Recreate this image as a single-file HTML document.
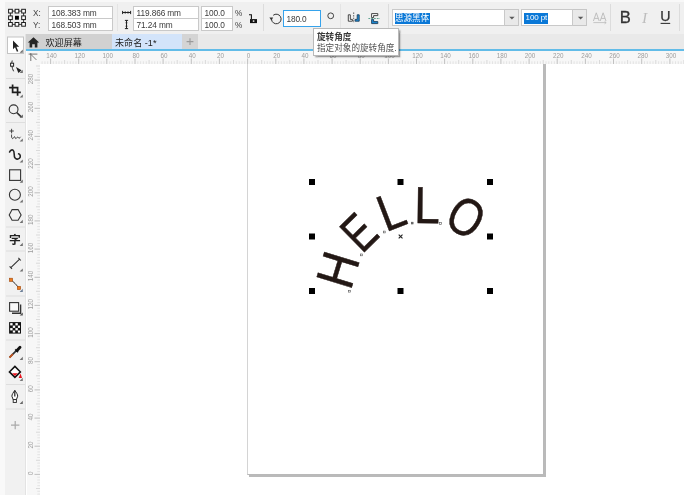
<!DOCTYPE html>
<html lang="zh-CN">
<head>
<meta charset="utf-8">
<title>CorelDRAW - 未命名 -1</title>
<style>
html,body{margin:0;padding:0;}
body{width:684px;height:495px;overflow:hidden;background:#fff;position:relative;
  font-family:"Liberation Sans","Noto Sans CJK SC",sans-serif;font-size:8.5px;color:#333;}
.abs{position:absolute;}
#topbar{left:0;top:0;width:684px;height:34px;background:#f0f0f0;}
#topbar .hl{left:0;top:0;width:684px;height:2px;background:#f8f8f8;}
#leftstrip{left:0;top:0;width:5px;height:34px;background:#f9f9f9;}
#tabbar{left:26px;top:34px;width:658px;height:15px;background:#e9e9e9;}
#blueline{left:26px;top:49px;width:658px;height:2px;background:#62bce8;}
#toolbox{left:0;top:34px;width:26px;height:461px;background:linear-gradient(90deg,#f9f9f9 0,#f9f9f9 5px,#f1f1f1 5px,#f1f1f1 25px,#e3e3e3 25px);}
#hruler{left:27px;top:51px;width:657px;height:13px;background:#f7f7f7;}
#vruler{left:27px;top:64px;width:13px;height:431px;background:#f7f7f7;}
.inp{background:#fff;border:1px solid #c9c9c9;box-sizing:border-box;height:12px;line-height:12px;
  font-size:8.3px;letter-spacing:-0.12px;color:#3a3a3a;padding-left:2.6px;white-space:nowrap;overflow:hidden;}
.lbl{font-size:8.2px;color:#444;line-height:12px;white-space:nowrap;}
.sep{width:1px;background:#dcdcdc;top:4px;height:27px;}
.tab{top:0;height:15px;font-size:9.1px;line-height:18.5px;color:#222;white-space:nowrap;}
.tsep{left:5px;width:18px;height:1px;background:#dedede;}
#tip{left:313px;top:27.5px;width:86px;height:28px;background:#fff;border:1px solid #b9b9b9;box-sizing:border-box;
  box-shadow:1.5px 1.5px 1.5px rgba(0,0,0,.38);font-size:8.6px;line-height:11.6px;color:#505050;padding:3px 0 0 3px;white-space:nowrap;}
.sel{background:#0a78d7;color:#fff;line-height:10.5px;font-size:8px;white-space:nowrap;overflow:hidden;}
.cbtn{background:#e9e9e9;border:1px solid #c6c6c6;border-left:none;box-sizing:border-box;}
.big{font-size:16px;line-height:17px;}
</style>
</head>
<body>
<div id="root" style="position:absolute;left:0;top:0;width:684px;height:495px;will-change:transform;overflow:hidden;background:#fff;">

<!-- canvas / page -->
<div class="abs" id="page" style="left:247.1px;top:54px;width:295.4px;height:418.6px;background:#fff;border:1px solid #d4d4d4;border-right-color:#b9b9b9;border-bottom-color:#b9b9b9;box-sizing:content-box;box-shadow:2px 2px 0 #bababa;"></div>

<!-- artwork -->
<svg class="abs" id="art" style="left:0;top:0;will-change:transform" width="684" height="495" viewBox="0 0 684 495">
  <g font-family="Liberation Sans, sans-serif" font-size="53" fill="#231815" stroke="#231815" stroke-width="0.5" opacity="0.999" text-rendering="geometricPrecision">
    <text transform="translate(350.5,291.2) rotate(-73) scale(0.88,1)">H</text>
    <text transform="translate(362.0,254.4) rotate(-44.6) scale(0.76,0.975)">E</text>
    <text transform="translate(385.8,232.2) rotate(-21) scale(0.86,0.975)">L</text>
    <text transform="translate(414,222.9) rotate(0.7) scale(0.87,0.985)">L</text>
    <text transform="translate(442.2,224.4) rotate(30) scale(0.82,1)">O</text>
  </g>
  <g fill="#000">
    <rect x="309" y="179" width="6" height="6"/><rect x="397.5" y="179" width="6" height="6"/><rect x="487" y="179" width="6" height="6"/>
    <rect x="309" y="233.5" width="6" height="6"/><rect x="487" y="233.5" width="6" height="6"/>
    <rect x="309" y="288" width="6" height="6"/><rect x="397.5" y="288" width="6" height="6"/><rect x="487" y="288" width="6" height="6"/>
  </g>
  <g fill="#fff" stroke="#555" stroke-width="0.6">
    <rect x="348.6" y="290.3" width="1.8" height="1.8"/>
    <rect x="360.5" y="254" width="1.8" height="1.8"/>
    <rect x="383.4" y="231.1" width="1.8" height="1.8"/>
    <rect x="411.3" y="222.2" width="1.8" height="1.8" fill="#777"/>
    <rect x="439.4" y="222.4" width="2.2" height="2.2"/>
  </g>
  <path d="M398.7 234.6l3.8 3.8M402.5 234.6l-3.8 3.8" stroke="#222" stroke-width="1.1" fill="none"/>
</svg>

<!-- rulers -->
<div class="abs" id="hruler"></div>
<div class="abs" id="vruler"></div>
<!-- RULERS_START -->
<svg class="abs" id="hr" style="left:27px;top:51px" width="657" height="13" viewBox="27 51 657 13">
<path d="M42.1 61.3V64M44.9 61.3V64M47.7 61.3V64M53.4 61.3V64M56.2 61.3V64M59.0 61.3V64M61.8 61.3V64M67.4 61.3V64M70.3 61.3V64M73.1 61.3V64M75.9 61.3V64M81.5 61.3V64M84.3 61.3V64M87.1 61.3V64M90.0 61.3V64M95.6 61.3V64M98.4 61.3V64M101.2 61.3V64M104.0 61.3V64M109.7 61.3V64M112.5 61.3V64M115.3 61.3V64M118.1 61.3V64M123.7 61.3V64M126.6 61.3V64M129.4 61.3V64M132.2 61.3V64M137.8 61.3V64M140.6 61.3V64M143.4 61.3V64M146.3 61.3V64M151.9 61.3V64M154.7 61.3V64M157.5 61.3V64M160.3 61.3V64M166.0 61.3V64M168.8 61.3V64M171.6 61.3V64M174.4 61.3V64M180.0 61.3V64M182.9 61.3V64M185.7 61.3V64M188.5 61.3V64M194.1 61.3V64M196.9 61.3V64M199.7 61.3V64M202.6 61.3V64M208.2 61.3V64M211.0 61.3V64M213.8 61.3V64M216.6 61.3V64M222.3 61.3V64M225.1 61.3V64M227.9 61.3V64M230.7 61.3V64M236.3 61.3V64M239.2 61.3V64M242.0 61.3V64M244.8 61.3V64M250.4 61.3V64M253.2 61.3V64M256.0 61.3V64M258.9 61.3V64M264.5 61.3V64M267.3 61.3V64M270.1 61.3V64M272.9 61.3V64M278.6 61.3V64M281.4 61.3V64M284.2 61.3V64M287.0 61.3V64M292.6 61.3V64M295.5 61.3V64M298.3 61.3V64M301.1 61.3V64M306.7 61.3V64M309.5 61.3V64M312.3 61.3V64M315.2 61.3V64M320.8 61.3V64M323.6 61.3V64M326.4 61.3V64M329.2 61.3V64M334.9 61.3V64M337.7 61.3V64M340.5 61.3V64M343.3 61.3V64M348.9 61.3V64M351.8 61.3V64M354.6 61.3V64M357.4 61.3V64M363.0 61.3V64M365.8 61.3V64M368.6 61.3V64M371.5 61.3V64M377.1 61.3V64M379.9 61.3V64M382.7 61.3V64M385.5 61.3V64M391.2 61.3V64M394.0 61.3V64M396.8 61.3V64M399.6 61.3V64M405.2 61.3V64M408.1 61.3V64M410.9 61.3V64M413.7 61.3V64M419.3 61.3V64M422.1 61.3V64M424.9 61.3V64M427.8 61.3V64M433.4 61.3V64M436.2 61.3V64M439.0 61.3V64M441.8 61.3V64M447.5 61.3V64M450.3 61.3V64M453.1 61.3V64M455.9 61.3V64M461.5 61.3V64M464.4 61.3V64M467.2 61.3V64M470.0 61.3V64M475.6 61.3V64M478.4 61.3V64M481.2 61.3V64M484.1 61.3V64M489.7 61.3V64M492.5 61.3V64M495.3 61.3V64M498.1 61.3V64M503.8 61.3V64M506.6 61.3V64M509.4 61.3V64M512.2 61.3V64M517.8 61.3V64M520.7 61.3V64M523.5 61.3V64M526.3 61.3V64M531.9 61.3V64M534.7 61.3V64M537.5 61.3V64M540.4 61.3V64M546.0 61.3V64M548.8 61.3V64M551.6 61.3V64M554.4 61.3V64M560.1 61.3V64M562.9 61.3V64M565.7 61.3V64M568.5 61.3V64M574.1 61.3V64M577.0 61.3V64M579.8 61.3V64M582.6 61.3V64M588.2 61.3V64M591.0 61.3V64M593.8 61.3V64M596.7 61.3V64M602.3 61.3V64M605.1 61.3V64M607.9 61.3V64M610.7 61.3V64M616.4 61.3V64M619.2 61.3V64M622.0 61.3V64M624.8 61.3V64M630.4 61.3V64M633.3 61.3V64M636.1 61.3V64M638.9 61.3V64M644.5 61.3V64M647.3 61.3V64M650.1 61.3V64M653.0 61.3V64M658.6 61.3V64M661.4 61.3V64M664.2 61.3V64M667.0 61.3V64M672.7 61.3V64M675.5 61.3V64M678.3 61.3V64M681.1 61.3V64" stroke="#dedede" stroke-width="0.8" fill="none"/>
<path d="M64.6 60V64M92.8 60V64M120.9 60V64M149.1 60V64M177.2 60V64M205.4 60V64M233.5 60V64M261.7 60V64M289.8 60V64M318.0 60V64M346.1 60V64M374.3 60V64M402.4 60V64M430.6 60V64M458.7 60V64M486.9 60V64M515.0 60V64M543.2 60V64M571.3 60V64M599.5 60V64M627.6 60V64M655.8 60V64M683.9 60V64" stroke="#d2d2d2" stroke-width="0.8" fill="none"/>
<path d="M50.6 58.5V64M78.7 58.5V64M106.8 58.5V64M135.0 58.5V64M163.1 58.5V64M191.3 58.5V64M219.4 58.5V64M247.6 58.5V64M275.8 58.5V64M303.9 58.5V64M332.1 58.5V64M360.2 58.5V64M388.4 58.5V64M416.5 58.5V64M444.6 58.5V64M472.8 58.5V64M500.9 58.5V64M529.1 58.5V64M557.2 58.5V64M585.4 58.5V64M613.5 58.5V64M641.7 58.5V64M669.9 58.5V64" stroke="#b2b2b2" stroke-width="0.8" fill="none"/>
<g font-family="Liberation Sans, sans-serif" font-size="6.3" fill="#9c9c9c"><text text-anchor="middle" x="51.6" y="57.6">140</text><text text-anchor="middle" x="79.7" y="57.6">120</text><text text-anchor="middle" x="107.8" y="57.6">100</text><text text-anchor="middle" x="136.0" y="57.6">80</text><text text-anchor="middle" x="164.1" y="57.6">60</text><text text-anchor="middle" x="192.3" y="57.6">40</text><text text-anchor="middle" x="220.4" y="57.6">20</text><text text-anchor="middle" x="248.6" y="57.6">0</text><text text-anchor="middle" x="276.8" y="57.6">20</text><text text-anchor="middle" x="304.9" y="57.6">40</text><text text-anchor="middle" x="333.1" y="57.6">60</text><text text-anchor="middle" x="361.2" y="57.6">80</text><text text-anchor="middle" x="389.4" y="57.6">100</text><text text-anchor="middle" x="417.5" y="57.6">120</text><text text-anchor="middle" x="445.6" y="57.6">140</text><text text-anchor="middle" x="473.8" y="57.6">160</text><text text-anchor="middle" x="501.9" y="57.6">180</text><text text-anchor="middle" x="530.1" y="57.6">200</text><text text-anchor="middle" x="558.2" y="57.6">220</text><text text-anchor="middle" x="586.4" y="57.6">240</text><text text-anchor="middle" x="614.5" y="57.6">260</text><text text-anchor="middle" x="642.7" y="57.6">280</text><text text-anchor="middle" x="670.9" y="57.6">300</text></g>
</svg>
<svg class="abs" id="vr" style="left:27px;top:64px" width="13" height="431" viewBox="27 64 13 431">
<path d="M37.3 494.1H40M37.3 491.3H40M37.3 485.7H40M37.3 482.8H40M37.3 480.0H40M37.3 477.2H40M37.3 471.6H40M37.3 468.8H40M37.3 466.0H40M37.3 463.1H40M37.3 457.5H40M37.3 454.7H40M37.3 451.9H40M37.3 449.1H40M37.3 443.4H40M37.3 440.6H40M37.3 437.8H40M37.3 435.0H40M37.3 429.3H40M37.3 426.5H40M37.3 423.7H40M37.3 420.9H40M37.3 415.3H40M37.3 412.4H40M37.3 409.6H40M37.3 406.8H40M37.3 401.2H40M37.3 398.4H40M37.3 395.5H40M37.3 392.7H40M37.3 387.1H40M37.3 384.3H40M37.3 381.5H40M37.3 378.6H40M37.3 373.0H40M37.3 370.2H40M37.3 367.4H40M37.3 364.6H40M37.3 358.9H40M37.3 356.1H40M37.3 353.3H40M37.3 350.5H40M37.3 344.8H40M37.3 342.0H40M37.3 339.2H40M37.3 336.4H40M37.3 330.8H40M37.3 327.9H40M37.3 325.1H40M37.3 322.3H40M37.3 316.7H40M37.3 313.9H40M37.3 311.0H40M37.3 308.2H40M37.3 302.6H40M37.3 299.8H40M37.3 297.0H40M37.3 294.2H40M37.3 288.5H40M37.3 285.7H40M37.3 282.9H40M37.3 280.1H40M37.3 274.4H40M37.3 271.6H40M37.3 268.8H40M37.3 266.0H40M37.3 260.4H40M37.3 257.5H40M37.3 254.7H40M37.3 251.9H40M37.3 246.3H40M37.3 243.5H40M37.3 240.6H40M37.3 237.8H40M37.3 232.2H40M37.3 229.4H40M37.3 226.6H40M37.3 223.7H40M37.3 218.1H40M37.3 215.3H40M37.3 212.5H40M37.3 209.7H40M37.3 204.0H40M37.3 201.2H40M37.3 198.4H40M37.3 195.6H40M37.3 189.9H40M37.3 187.1H40M37.3 184.3H40M37.3 181.5H40M37.3 175.9H40M37.3 173.0H40M37.3 170.2H40M37.3 167.4H40M37.3 161.8H40M37.3 159.0H40M37.3 156.1H40M37.3 153.3H40M37.3 147.7H40M37.3 144.9H40M37.3 142.1H40M37.3 139.2H40M37.3 133.6H40M37.3 130.8H40M37.3 128.0H40M37.3 125.2H40M37.3 119.5H40M37.3 116.7H40M37.3 113.9H40M37.3 111.1H40M37.3 105.5H40M37.3 102.6H40M37.3 99.8H40M37.3 97.0H40M37.3 91.4H40M37.3 88.6H40M37.3 85.7H40M37.3 82.9H40M37.3 77.3H40M37.3 74.5H40M37.3 71.7H40M37.3 68.8H40" stroke="#dedede" stroke-width="0.8" fill="none"/>
<path d="M36 488.5H40M36 460.3H40M36 432.2H40M36 404.0H40M36 375.8H40M36 347.7H40M36 319.5H40M36 291.3H40M36 263.2H40M36 235.0H40M36 206.8H40M36 178.7H40M36 150.5H40M36 122.4H40M36 94.2H40M36 66.0H40" stroke="#d2d2d2" stroke-width="0.8" fill="none"/>
<path d="M34.5 474.4H40M34.5 446.2H40M34.5 418.1H40M34.5 389.9H40M34.5 361.7H40M34.5 333.6H40M34.5 305.4H40M34.5 277.3H40M34.5 249.1H40M34.5 220.9H40M34.5 192.8H40M34.5 164.6H40M34.5 136.4H40M34.5 108.3H40M34.5 80.1H40" stroke="#b2b2b2" stroke-width="0.8" fill="none"/>
<g font-family="Liberation Sans, sans-serif" font-size="6.3" fill="#9c9c9c"><text text-anchor="middle" transform="translate(33,473.2) rotate(-90)">0</text><text text-anchor="middle" transform="translate(33,445.0) rotate(-90)">20</text><text text-anchor="middle" transform="translate(33,416.9) rotate(-90)">40</text><text text-anchor="middle" transform="translate(33,388.7) rotate(-90)">60</text><text text-anchor="middle" transform="translate(33,360.5) rotate(-90)">80</text><text text-anchor="middle" transform="translate(33,332.4) rotate(-90)">100</text><text text-anchor="middle" transform="translate(33,304.2) rotate(-90)">120</text><text text-anchor="middle" transform="translate(33,276.1) rotate(-90)">140</text><text text-anchor="middle" transform="translate(33,247.9) rotate(-90)">160</text><text text-anchor="middle" transform="translate(33,219.7) rotate(-90)">180</text><text text-anchor="middle" transform="translate(33,191.6) rotate(-90)">200</text><text text-anchor="middle" transform="translate(33,163.4) rotate(-90)">220</text><text text-anchor="middle" transform="translate(33,135.2) rotate(-90)">240</text><text text-anchor="middle" transform="translate(33,107.1) rotate(-90)">260</text><text text-anchor="middle" transform="translate(33,78.9) rotate(-90)">280</text></g>
</svg>
<!-- RULERS_END -->

<!-- top property bar -->
<div class="abs" id="topbar">
  <div class="abs hl"></div>
  <div class="abs" id="leftstrip"></div>
  <div class="abs lbl" style="left:33px;top:8px;">X:</div>
  <div class="abs lbl" style="left:33px;top:20px;">Y:</div>
  <div class="abs inp" style="left:48px;top:6px;width:65px;height:13px;">108.383 mm</div>
  <div class="abs inp" style="left:48px;top:18px;width:65px;height:13px;">168.503 mm</div>
  <div class="abs sep" style="left:117px;background:#e4e4e4;"></div>
  <div class="abs inp" style="left:133px;top:6px;width:66px;height:13px;">119.866 mm</div>
  <div class="abs inp" style="left:133px;top:18px;width:66px;height:13px;">71.24 mm</div>
  <div class="abs inp" style="left:201px;top:6px;width:32px;height:13px;">100.0</div>
  <div class="abs inp" style="left:201px;top:18px;width:32px;height:13px;">100.0</div>
  <div class="abs lbl" style="left:235px;top:8px;">%</div>
  <div class="abs lbl" style="left:235px;top:20px;">%</div>
  <div class="abs sep" style="left:263px;"></div>
  <div class="abs inp" style="left:283px;top:10px;width:38px;height:17px;line-height:17px;border-color:#36a3ec;padding-left:2.4px;">180.0</div>
  <div class="abs sep" style="left:340px;background:#e4e4e4;"></div>
  <div class="abs sep" style="left:388px;"></div>
  <div class="abs inp" style="left:392px;top:9px;width:113px;height:17px;padding:0;"><span class="abs sel" style="left:2px;top:3px;width:35px;height:10.5px;font-size:8.6px;">思源黑体</span></div>
  <div class="abs cbtn" style="left:505px;top:9px;width:14px;height:17px;"></div>
  <div class="abs inp" style="left:521px;top:9px;width:52px;height:17px;padding:0;"><span class="abs sel" style="left:2.4px;top:3px;width:24px;height:10.5px;text-indent:1.2px;letter-spacing:-0.1px;">100 pt</span></div>
  <div class="abs cbtn" style="left:573px;top:9px;width:14px;height:17px;"></div>
  <div class="abs sep" style="left:610px;"></div>
  <div class="abs big" style="left:619.8px;top:9.4px;color:#333;font-size:16.6px;-webkit-text-stroke:0.3px #333;">B</div>
  <div class="abs big" style="left:642px;top:9px;color:#bdbdbd;font-family:'Liberation Serif',serif;font-style:italic;font-size:15.5px;">I</div>
  <div class="abs big" style="left:660.2px;top:8px;color:#333;font-size:14.2px;-webkit-text-stroke:0.25px #333;">U</div>
  <div class="abs sep" style="left:679px;"></div>
</div>

<!-- tabs -->
<div class="abs" id="tabbar">
  <div class="abs tab" style="left:0;width:86px;background:#d1d1d1;"><span class="abs" style="left:19.5px;top:0;">欢迎屏幕</span></div>
  <div class="abs tab" style="left:86px;width:70px;background:#d3e4fa;"><span class="abs" style="left:3px;top:0;">未命名 -1*</span></div>
  <div class="abs tab" style="left:156px;width:16px;background:#d4d4d4;"></div>
</div>
<div class="abs" id="blueline"></div>
<!-- TI_START -->
<svg class="abs" id="ti" style="left:0;top:0" width="684" height="66" viewBox="0 0 684 66">
  <!-- object origin grid -->
  <path d="M10.4 11.1H23.6V24.4H10.4Z" fill="none" stroke="#222" stroke-width="0.9"/>
  <g fill="#fff" stroke="#1c1c1c" stroke-width="1">
    <rect x="8.6" y="9.3" width="3.7" height="3.7"/><rect x="15.1" y="9.3" width="3.7" height="3.7"/><rect x="21.7" y="9.3" width="3.7" height="3.7"/>
    <rect x="8.6" y="15.9" width="3.7" height="3.7"/><rect x="21.7" y="15.9" width="3.7" height="3.7"/>
    <rect x="8.6" y="22.5" width="3.7" height="3.7"/><rect x="15.1" y="22.5" width="3.7" height="3.7"/><rect x="21.7" y="22.5" width="3.7" height="3.7"/>
  </g>
  <rect x="15" y="15.8" width="3.9" height="3.9" fill="#000"/>
  <!-- width / height icons -->
  <path d="M122.6 12.5H130.6M122.6 10.9V14.1M130.6 10.9V14.1M125.2 11.4V13.6M128 11.4V13.6" stroke="#222" stroke-width="1" fill="none"/>
  <path d="M126.5 20.4V28.6M124.9 20.4H128.1M124.9 28.6H128.1M125.6 22.8H127.4M125.6 26.2H127.4" stroke="#222" stroke-width="1" fill="none"/>
  <!-- lock (open) -->
  <path d="M249 14.8H251.4V19.2" fill="none" stroke="#111" stroke-width="1.1"/>
  <rect x="250" y="19.1" width="7" height="4" fill="#111"/>
  <path d="M252.6 21.1H254.6M253.6 20.2V22" stroke="#fff" stroke-width="0.7" fill="none"/>
  <!-- rotation icon -->
  <path d="M273.2 15.3A4.8 4.8 0 1 1 271.5 19.3" fill="none" stroke="#333" stroke-width="1"/>
  <path d="M269.4 17.6H273.2L271.4 20.6Z" fill="#333"/>
  <!-- degree circle -->
  <circle cx="330.7" cy="15.8" r="2.9" fill="none" stroke="#444" stroke-width="1"/>
  <!-- mirror horizontal -->
  <path d="M348.3 14.8H350.3V19.4H352.4V21.2H348.3Z" fill="#fff" stroke="#333" stroke-width="0.9"/>
  <path d="M359.2 14.8H357.2V19.4H355.1V21.2H359.2Z" fill="#1b8ad6" stroke="#1d3f5c" stroke-width="0.9"/>
  <path d="M353.7 12.4V23" stroke="#444" stroke-width="0.8" stroke-dasharray="1.6 1" fill="none"/>
  <!-- mirror vertical -->
  <path d="M371.6 17.6V13.6H377.8V15.6H373.6V17.6Z" fill="#fff" stroke="#333" stroke-width="0.9"/>
  <path d="M371.6 19.4V23.6H377.8V21.6H373.6V19.4Z" fill="#1b8ad6" stroke="#1d3f5c" stroke-width="0.9"/>
  <path d="M368.4 18.5H380" stroke="#3d8f7a" stroke-width="0.8" stroke-dasharray="1.8 1" fill="none"/>
  <!-- combo arrows -->
  <path d="M509.2 16.8H514.6L511.9 19.4Z" fill="#5a5a5a"/>
  <path d="M577.9 16.8H583.3L580.6 19.4Z" fill="#5a5a5a"/>
  <!-- AA icon -->
  <path d="M593.4 21L596.3 12.8L599.2 21M594.4 18.4H598.2M600.2 21L603.1 12.8L606 21M601.2 18.4H605" fill="none" stroke="#b9b9b9" stroke-width="0.9"/>
  <path d="M593.4 22.6H606M604.6 21.4L606.2 22.6L604.6 23.8" fill="none" stroke="#b9b9b9" stroke-width="0.8"/>
  <!-- U underline -->
  <path d="M660.6 23.4H670.2" stroke="#333" stroke-width="1.1" fill="none"/>
  <!-- home icon -->
  <path d="M33.5 37.2L27.8 42.6H29.6V47.6H32.2V44.2H34.8V47.6H37.4V42.6H39.2Z" fill="#262626"/>
  <!-- plus on new tab -->
  <path d="M186.6 41.6H193.4M190 38.2V45" stroke="#9a9a9a" stroke-width="1.1" fill="none"/>
  <!-- ruler corner -->
  <path d="M28.6 54.1H37.4M30.8 53V61M31 54.5L36.4 59.9" stroke="#555" stroke-width="0.8" fill="none"/>
</svg>

<!-- TI_END -->

<!-- toolbox -->
<div class="abs" id="toolbox"></div>
<!-- TB_START -->
<svg class="abs" id="tb" style="left:0;top:34px" width="27" height="461" viewBox="0 34 27 461">
  <!-- select tool (active) -->
  <rect x="7.5" y="37" width="16" height="16.5" fill="#fff" stroke="#c4c4c4" stroke-width="1"/>
  <path d="M13 40.4V49.2L15 47.3L16.9 51.8L18.3 51.2L16.4 46.8H19.2Z" fill="#222"/>
  <path d="M22.8 49.6V52.8H19.6Z" fill="#6e6e6e"/>
  <!-- shape tool -->
  <path d="M12.2 60.5C11.4 63.5 11.6 67.5 13.6 71.3" fill="none" stroke="#333" stroke-width="1"/>
  <rect x="10.6" y="63.2" width="3" height="3" fill="#fff" stroke="#222" stroke-width="1"/>
  <path d="M16 66.9L21.6 70.2L18.4 73Z" fill="#222"/>
  <path d="M22.8 69.8V73.0H19.6Z" fill="#6e6e6e"/>
  <rect class="s" x="6" y="78" width="19" height="1" fill="#dedede"/>
  <!-- crop -->
  <path d="M12.6 84.6V92.4H20.8M9.1 87.6H17.6V95.8" fill="none" stroke="#1e1e1e" stroke-width="1.7"/>
  <path d="M22.8 94.4V97.6H19.6Z" fill="#6e6e6e"/>
  <!-- zoom -->
  <circle cx="13.6" cy="109.3" r="4.4" fill="none" stroke="#333" stroke-width="1.1"/>
  <path d="M16.8 112.6L21 116.6" stroke="#333" stroke-width="1.6" fill="none"/>
  <path d="M22.8 114.6V117.8H19.6Z" fill="#555"/>
  <rect x="6" y="122" width="19" height="1" fill="#dedede"/>
  <!-- freehand -->
  <path d="M9.4 131H13.8M11.6 128.8V133.4" stroke="#333" stroke-width="0.9" fill="none"/>
  <path d="M11.6 134.5C11.4 136.5 11.6 138.4 12.6 138.6C13.6 138.6 14 136.6 14.6 136.6C15.2 136.8 15 138.6 15.8 138.6C16.8 138.4 17 137 17.8 137C18.6 137.2 18.4 138.4 19.2 138.2C19.8 138 20.2 137.4 20.6 136.8" stroke="#333" stroke-width="0.9" fill="none"/>
  <path d="M22.8 138.4V141.6H19.6Z" fill="#6e6e6e"/>
  <!-- artistic media -->
  <path d="M9.6 152C10.2 150.4 11.8 149.4 13 150.2C15 151.6 13.6 155.4 14.8 157.6C15.8 159.4 18 159.6 19.4 158.2C20.8 156.8 20.6 154.6 18.6 153.8" fill="none" stroke="#222" stroke-width="1.6" stroke-linecap="round"/>
  <path d="M22.8 159.4V162.6H19.6Z" fill="#6e6e6e"/>
  <!-- rectangle -->
  <rect x="9.6" y="169.8" width="11" height="10.6" fill="none" stroke="#333" stroke-width="1.1"/>
  <path d="M22.8 179.6V182.8H19.6Z" fill="#6e6e6e"/>
  <!-- ellipse -->
  <circle cx="14.9" cy="194.8" r="5.5" fill="none" stroke="#333" stroke-width="1.1"/>
  <path d="M22.8 199.4V202.6H19.6Z" fill="#6e6e6e"/>
  <!-- polygon -->
  <path d="M9.2 214.9L12.1 209.6H18.1L21.1 214.9L18.1 220.3H12.1Z" fill="none" stroke="#333" stroke-width="1.1"/>
  <path d="M22.8 219.8V223.0H19.6Z" fill="#6e6e6e"/>
  <rect x="6" y="226.5" width="19" height="1" fill="#dedede"/>
  <!-- text -->
  <text x="9" y="243.6" font-family="Liberation Sans, Noto Sans CJK SC, sans-serif" font-size="11.8" font-weight="bold" fill="#222">字</text>
  <path d="M22.8 242.8V246.0H19.6Z" fill="#6e6e6e"/>
  <rect x="6" y="250.5" width="19" height="1" fill="#dedede"/>
  <!-- dimension -->
  <path d="M10.8 267.6L19.6 259.2M9.6 266.3L12 268.9M18.4 257.9L20.8 260.5" stroke="#333" stroke-width="1.1" fill="none"/>
  <path d="M22.8 268.4V271.6H19.6Z" fill="#6e6e6e"/>
  <!-- connector -->
  <path d="M11 279.8L15 283.4L19 288" stroke="#333" stroke-width="1" fill="none"/>
  <rect x="9.4" y="278.2" width="3.2" height="3.2" fill="#ec7a1c" stroke="#a04a10" stroke-width="0.6"/>
  <rect x="17.3" y="286.3" width="3.3" height="3.3" fill="#ec7a1c" stroke="#a04a10" stroke-width="0.6"/>
  <path d="M22.8 288.8V292.0H19.6Z" fill="#6c7f98"/>
  <rect x="6" y="295.5" width="19" height="1" fill="#dedede"/>
  <!-- drop shadow -->
  <path d="M20.6 304.6V313.2H12" fill="none" stroke="#333" stroke-width="1.4"/>
  <rect x="9.6" y="302.6" width="9" height="8.6" fill="#fafafa" stroke="#333" stroke-width="1.1"/>
  <path d="M22.8 312.4V315.6H19.6Z" fill="#555"/>
  <!-- transparency checker -->
  <rect x="9.1" y="322.1" width="11.9" height="11.5" fill="#111"/>
  <g fill="#fff">
    <rect x="10.2" y="323.1" width="2.4" height="2.3"/><rect x="15.4" y="323.1" width="2.4" height="2.3"/>
    <rect x="12.8" y="325.6" width="2.4" height="2.3"/><rect x="17.9" y="325.6" width="2.1" height="2.3"/>
    <rect x="10.2" y="328.1" width="2.4" height="2.3"/><rect x="15.4" y="328.1" width="2.4" height="2.3"/>
    <rect x="12.8" y="330.5" width="2.4" height="2.1"/><rect x="17.9" y="330.5" width="2.1" height="2.1"/>
  </g>
  <rect x="6" y="339.5" width="19" height="1" fill="#dedede"/>
  <!-- eyedropper -->
  <path d="M9.6 357.4L16.6 350.4" stroke="#333" stroke-width="1.7" fill="none"/>
  <path d="M9.5 357.6L12.8 354.2" stroke="#c4551e" stroke-width="1.8" fill="none"/>
  <path d="M15.2 349.4L18 352.2" stroke="#222" stroke-width="1.6" fill="none"/>
  <path d="M17 350.4L20 347.3" stroke="#111" stroke-width="2.9" stroke-linecap="round" fill="none"/>
  <path d="M22.8 356.8V360.0H19.6Z" fill="#6e6e6e"/>
  <!-- fill -->
  <path d="M14.9 366.4L20.4 371.9L14.9 377.4L9.4 371.9Z" fill="#fff" stroke="#111" stroke-width="1.5"/>
  <path d="M12 373.2H17.8L14.9 376Z" fill="#e8121c"/>
  <path d="M20.6 373.4L22 378H18.6Z" fill="#e8121c"/>
  <path d="M22.8 377.8V381.0H19.6Z" fill="#777"/>
  <rect x="6" y="384" width="19" height="1" fill="#dedede"/>
  <!-- outline pen -->
  <path d="M14.8 390.4C13.4 392.4 11.8 394.6 11.9 396.2L13.2 399.6H16.4L17.7 396.2C17.8 394.6 16.2 392.4 14.8 390.4Z" fill="#fff" stroke="#222" stroke-width="1"/>
  <path d="M14.8 390.6V396.4" stroke="#222" stroke-width="1.2" fill="none"/>
  <rect x="13.2" y="399.6" width="3.2" height="2.8" fill="#fff" stroke="#222" stroke-width="0.9"/>
  <path d="M22.8 400.8V404.0H19.6Z" fill="#666"/>
  <rect x="6" y="408.5" width="19" height="1" fill="#dedede"/>
  <!-- plus -->
  <path d="M11 425.1H19.4M15.2 420.9V429.3" stroke="#a9a9a9" stroke-width="1.2" fill="none"/>
</svg>

<!-- TB_END -->

<!-- tooltip -->
<div class="abs" id="tip"><b style="color:#3a3a3a">旋转角度</b><br>指定对象的旋转角度.</div>

</div>
</body>
</html>
